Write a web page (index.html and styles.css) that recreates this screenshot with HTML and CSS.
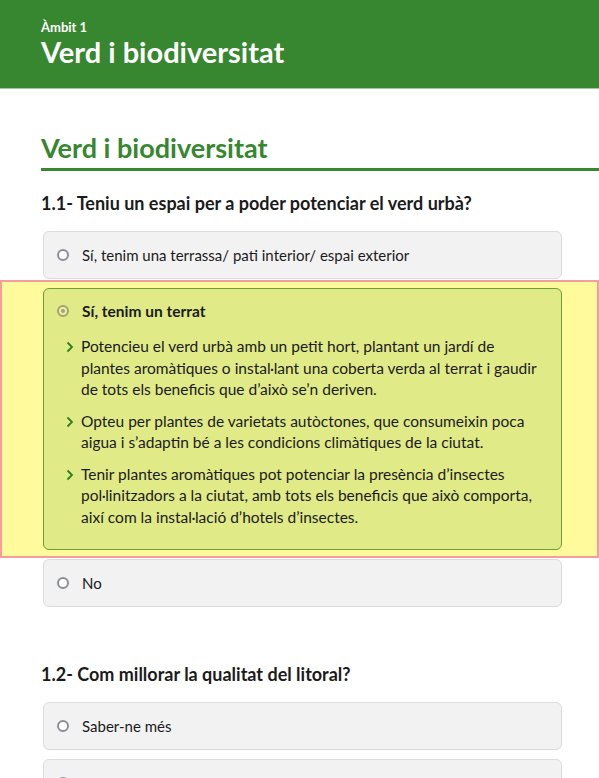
FILE: index.html
```html
<!DOCTYPE html>
<html lang="ca">
<head>
<meta charset="utf-8">
<title>Verd i biodiversitat</title>
<link rel="stylesheet" href="styles.css">
</head>
<body>
<header class="top">
  <div class="eyebrow">Àmbit 1</div>
  <h1 class="top-title">Verd i biodiversitat</h1>
</header>
<main class="content">
  <h2 class="section-title">Verd i biodiversitat</h2>

  <section class="question">
    <h3 class="q-title">1.1- Teniu un espai per a poder potenciar el verd urbà?</h3>
    <div class="options">
      <div class="option">
        <span class="radio"></span>
        <span class="opt-label">Sí, tenim una terrassa/ pati interior/ espai exterior</span>
      </div>
      <div class="highlight">
        <div class="option selected">
          <div class="opt-head">
            <span class="radio checked"></span>
            <span class="opt-label strong">Sí, tenim un terrat</span>
          </div>
          <ul class="tips">
            <li class="tip">
              <svg class="chev" viewBox="0 0 8 12" width="8" height="12"><path d="M1.5 1.5 L6 6 L1.5 10.5" fill="none" stroke="#2f7d22" stroke-width="1.8"/></svg>
              <span>Potencieu el verd urbà amb un petit hort, plantant un jardí de plantes aromàtiques o instal·lant una coberta verda al terrat i gaudir de tots els beneficis que d’això se’n deriven.</span>
            </li>
            <li class="tip">
              <svg class="chev" viewBox="0 0 8 12" width="8" height="12"><path d="M1.5 1.5 L6 6 L1.5 10.5" fill="none" stroke="#2f7d22" stroke-width="1.8"/></svg>
              <span>Opteu per plantes de varietats autòctones, que consumeixin poca aigua i s’adaptin bé a les condicions climàtiques de la ciutat.</span>
            </li>
            <li class="tip">
              <svg class="chev" viewBox="0 0 8 12" width="8" height="12"><path d="M1.5 1.5 L6 6 L1.5 10.5" fill="none" stroke="#2f7d22" stroke-width="1.8"/></svg>
              <span>Tenir plantes aromàtiques pot potenciar la presència d’insectes pol·linitzadors a la ciutat, amb tots els beneficis que això comporta, així com la instal·lació d’hotels d’insectes.</span>
            </li>
          </ul>
        </div>
      </div>
      <div class="option">
        <span class="radio"></span>
        <span class="opt-label">No</span>
      </div>
    </div>
  </section>

  <section class="question">
    <h3 class="q-title">1.2- Com millorar la qualitat del litoral?</h3>
    <div class="options">
      <div class="option">
        <span class="radio"></span>
        <span class="opt-label">Saber-ne més</span>
      </div>
      <div class="option">
        <span class="radio"></span>
        <span class="opt-label">No</span>
      </div>
    </div>
  </section>
</main>
</body>
</html>
```

FILE: styles.css
```css
html, body {
  margin: 0;
  padding: 0;
  background: #ffffff;
}
body {
  font-family: Lato, "Open Sans", sans-serif;
  color: #1b1b1b;
  overflow: hidden;
}
.top {
  background: #368730;
  height: 89px;
  box-sizing: border-box;
  border-bottom: 1px solid #9fca95;
  padding: 19px 0 0 41px;
  color: #ffffff;
}
.eyebrow {
  font-size: 13px;
  font-weight: 700;
  line-height: 16px;
}
.top-title {
  margin: 0;
  font-size: 29px;
  font-weight: 700;
  line-height: 34px;
}
.content {
  padding: 43px 0 0 41px;
}
.section-title {
  margin: 0;
  color: #368730;
  font-size: 27px;
  font-weight: 700;
  line-height: 32px;
  padding-bottom: 4px;
  border-bottom: 3px solid #368730;
}
.question {
  margin-top: 21px;
}
.question + .question {
  margin-top: 56px;
}
.q-title {
  margin: 0 0 17px 0;
  font-size: 18px;
  font-weight: 700;
  line-height: 22px;
}
.options {
  margin-left: -41px;
  display: flex;
  flex-direction: column;
  gap: 9px;
}
.option {
  margin: 0 37px 0 43px;
  background: #f2f2f2;
  border: 1px solid #dcdcdc;
  border-radius: 6px;
  padding: 12px 13px;
  display: flex;
  align-items: center;
  gap: 13px;
  font-size: 15px;
  line-height: 22px;
}
.radio {
  width: 12px;
  height: 12px;
  box-sizing: border-box;
  border: 2px solid #8c8c9b;
  border-radius: 50%;
  background: #ffffff;
  flex: none;
}
.radio.checked {
  border-color: #a3a36e;
  background: #e9eeaa;
  position: relative;
}
.radio.checked::after {
  content: "";
  position: absolute;
  left: 2px;
  top: 2px;
  width: 4px;
  height: 4px;
  border-radius: 50%;
  background: #a3a36e;
}
.highlight {
  margin: -8px 0;
  background: #fffa9b;
  border: 2px solid #f59c9c;
  padding: 6px 35px 6px 41px;
}
.option.selected {
  margin: 0;
  background: #e0ea87;
  border-color: #6a9f3a;
  display: block;
  padding: 11px 20px 21px 13px;
}
.opt-head {
  display: flex;
  align-items: center;
  gap: 13px;
}
.strong {
  font-weight: 700;
  font-size: 15.5px;
}
.tips {
  list-style: none;
  margin: 14px 0 0 0;
  padding: 0;
}
.tip {
  display: flex;
  align-items: flex-start;
  gap: 7px;
  padding-left: 9px;
  font-size: 15.5px;
  line-height: 21.5px;
  margin-bottom: 10px;
}
.tip:last-child {
  margin-bottom: 0;
}
.chev {
  flex: none;
  margin-top: 5px;
}
```
